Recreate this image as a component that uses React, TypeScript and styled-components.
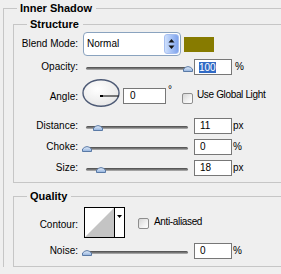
import React from "react";
import styled, { createGlobalStyle } from "styled-components";

const Global = createGlobalStyle`
  html, body { margin: 0; padding: 0; background: #efefef; overflow: hidden; }
  body {
    width: 281px; height: 274px;
    font-family: "Liberation Sans", Arial, sans-serif;
    font-size: 10px; color: #000;
  }
`;

const Outer = styled.fieldset`
  margin: 2px 0 0 3px;
  padding: 0;
  width: 278px;
  min-width: 0;
  box-sizing: border-box;
  border: 1px solid #c6c6c6;
  border-right: none;
  border-bottom: none;
`;

const Legend = styled.legend`
  margin-left: 13px;
  padding: 0 4px 0 3px;
  height: 13px;
  font-size: 11px;
  line-height: 13px;
  font-weight: bold;
  white-space: nowrap;
`;

const Group = styled.fieldset<{ $mt: number; $pt: number; $pb: number }>`
  margin: ${(p) => p.$mt}px 0 0 9px;
  padding: ${(p) => p.$pt}px 0 ${(p) => p.$pb}px 0;
  width: 268px;
  min-width: 0;
  box-sizing: border-box;
  border: 1px solid #c6c6c6;
  border-right: none;
  display: flex;
  flex-direction: column;
`;

const Row = styled.div<{ $h: number; $mt: number; $align?: string }>`
  display: flex;
  align-items: ${(p) => p.$align ?? "center"};
  height: ${(p) => p.$h}px;
  margin-top: ${(p) => p.$mt}px;
  flex: none;
`;

const Label = styled.span<{ $mt?: number }>`
  width: 64px;
  flex: none;
  text-align: right;
  line-height: 12px;
  white-space: nowrap;
  margin-top: ${(p) => p.$mt ?? 0}px;
`;

const Combo = styled.div`
  margin-left: 5px;
  width: 98px;
  height: 24px;
  flex: none;
  box-sizing: border-box;
  border: 1px solid #8aa3bf;
  border-radius: 4px;
  background: #fff;
  display: flex;
  align-items: center;
  padding: 0 1px 0 3px;
`;

const ComboText = styled.span`
  flex: 1;
  line-height: 12px;
`;

const ComboButton = styled.div`
  width: 15px;
  height: 20px;
  box-sizing: border-box;
  border: 1px solid #a7bff0;
  border-radius: 3px;
  background: linear-gradient(90deg, #cfe0fc 0%, #a9c4f6 45%, #7fa3ec 100%);
  display: flex;
  align-items: center;
  justify-content: center;
`;

const Swatch = styled.div<{ $color: string }>`
  margin-left: 3px;
  width: 30px;
  height: 15px;
  flex: none;
  background: ${(p) => p.$color};
`;

const SliderWrap = styled.div`
  position: relative;
  margin-left: 4px;
  width: 110px;
  height: 16px;
  flex: none;
  box-sizing: border-box;
  padding: 0 4px;
  display: flex;
  align-items: center;
`;

const Track = styled.div`
  flex: 1;
  height: 3px;
  margin-top: 2px;
  border-radius: 2px;
  background: linear-gradient(#4a4a4a 0%, #6f6f6f 45%, #b9b9b9 100%);
`;

const ThumbIcon = styled.svg`
  position: absolute;
  top: 6px;
`;

const NumBox = styled.div<{ $w: number; $ml: number; $mt?: number; $pl?: number }>`
  width: ${(p) => p.$w}px;
  height: 16px;
  flex: none;
  margin-left: ${(p) => p.$ml}px;
  margin-top: ${(p) => p.$mt ?? 0}px;
  box-sizing: border-box;
  border: 1px solid #777;
  background: #fff;
  padding-left: ${(p) => p.$pl ?? 4}px;
  display: flex;
  align-items: center;
  line-height: 12px;
`;

const Selected = styled.span`
  background: #316ac5;
  color: #fff;
  line-height: 11px;
`;

const Unit = styled.span<{ $ml: number; $mt?: number }>`
  margin-left: ${(p) => p.$ml}px;
  margin-top: ${(p) => p.$mt ?? 0}px;
  line-height: 12px;
`;

const Dial = styled.svg`
  margin-left: 4px;
  flex: none;
`;

const Check = styled.div<{ $ml: number; $mt?: number }>`
  width: 11px;
  height: 11px;
  flex: none;
  margin-left: ${(p) => p.$ml}px;
  margin-top: ${(p) => p.$mt ?? 0}px;
  box-sizing: border-box;
  border: 1px solid #8e8e8e;
  border-radius: 2px;
  background: linear-gradient(135deg, #d6d6d6 0%, #f2f2f2 60%, #ffffff 100%);
`;

const CheckText = styled.span<{ $ml: number; $mt?: number }>`
  margin-left: ${(p) => p.$ml}px;
  margin-top: ${(p) => p.$mt ?? 0}px;
  font-size: 10px;
  letter-spacing: -0.35px;
  line-height: 12px;
  white-space: nowrap;
`;

const ContourBox = styled.div`
  margin-left: 6px;
  width: 41px;
  height: 31px;
  flex: none;
  box-sizing: border-box;
  border: 1px solid #000;
  background: #fff;
  display: flex;
`;

const ContourPreview = styled.svg`
  flex: none;
`;

const ContourArrow = styled.div`
  flex: 1;
  border-left: 1px solid #000;
  display: flex;
  justify-content: center;
  padding-top: 7px;
`;

const Slider: React.FC<{ pos: number }> = ({ pos }) => (
  <SliderWrap>
    <Track />
    <ThumbIcon width="10" height="7" viewBox="0 0 10 7" style={{ left: `${pos * 100.5}px` }}>
      <defs>
        <linearGradient id="tg" x1="0" y1="0" x2="0" y2="1">
          <stop offset="0" stopColor="#e8f0fb" />
          <stop offset="1" stopColor="#8fb0dc" />
        </linearGradient>
      </defs>
      <path d="M0.5 6.5 L0.5 4 Q5 -0.8 9.5 4 L9.5 6.5 Z" fill="url(#tg)" stroke="#5a7aa6" strokeWidth="1" />
    </ThumbIcon>
  </SliderWrap>
);

export default function App() {
  return (
    <>
      <Global />
      <Outer>
        <Legend>Inner Shadow</Legend>
        <Group $mt={3} $pt={1} $pb={6}>
          <Legend>Structure</Legend>
          <Row $h={24} $mt={0}>
            <Label>Blend Mode:</Label>
            <Combo>
              <ComboText>Normal</ComboText>
              <ComboButton>
                <svg width="7" height="12" viewBox="0 0 7 12">
                  <path d="M3.5 1 L6.5 4.5 L0.5 4.5 Z" fill="#111" />
                  <path d="M3.5 11 L6.5 7.5 L0.5 7.5 Z" fill="#111" />
                </svg>
              </ComboButton>
            </Combo>
            <Swatch $color="#877b00" />
          </Row>
          <Row $h={16} $mt={3}>
            <Label>Opacity:</Label>
            <Slider pos={1} />
            <NumBox $w={38} $ml={2}>
              <Selected>100</Selected>
            </NumBox>
            <Unit $ml={3}>%</Unit>
          </Row>
          <Row $h={28} $mt={4} $align="flex-start">
            <Label $mt={12}>Angle:</Label>
            <Dial width="38" height="28" viewBox="0 0 38 28">
              <defs>
                <radialGradient id="dg" cx="0.4" cy="0.35" r="0.7">
                  <stop offset="0" stopColor="#ffffff" />
                  <stop offset="1" stopColor="#e6e6e6" />
                </radialGradient>
              </defs>
              <ellipse cx="19" cy="14" rx="18" ry="13.2" fill="url(#dg)" stroke="#4e5b76" strokeWidth="1.4" />
              <rect x="18" y="16" width="3" height="2" fill="#000" />
              <line x1="19" y1="17" x2="36.6" y2="17" stroke="#000" strokeWidth="1" />
            </Dial>
            <NumBox $w={43} $ml={3} $mt={9} $pl={6}>0</NumBox>
            <Unit $ml={2} $mt={5}>°</Unit>
            <Check $ml={10} $mt={14} />
            <CheckText $ml={4} $mt={10}>Use Global Light</CheckText>
          </Row>
          <Row $h={16} $mt={11}>
            <Label>Distance:</Label>
            <Slider pos={0.11} />
            <NumBox $w={38} $ml={2} $pl={5}>11</NumBox>
            <Unit $ml={1}>px</Unit>
          </Row>
          <Row $h={16} $mt={5}>
            <Label>Choke:</Label>
            <Slider pos={0} />
            <NumBox $w={38} $ml={2} $pl={5}>0</NumBox>
            <Unit $ml={1}>%</Unit>
          </Row>
          <Row $h={16} $mt={5}>
            <Label>Size:</Label>
            <Slider pos={0.135} />
            <NumBox $w={38} $ml={2} $pl={5}>18</NumBox>
            <Unit $ml={1}>px</Unit>
          </Row>
        </Group>
        <Group $mt={7} $pt={4} $pb={7}>
          <Legend>Quality</Legend>
          <Row $h={31} $mt={0}>
            <Label $mt={4}>Contour:</Label>
            <ContourBox>
              <ContourPreview width="29" height="29" viewBox="0 0 29 29">
                <path d="M0 29 L29 0 L29 29 Z" fill="#c4c4c4" />
              </ContourPreview>
              <ContourArrow>
                <svg width="5" height="3" viewBox="0 0 5 3">
                  <path d="M0 0 L5 0 L2.5 3 Z" fill="#000" />
                </svg>
              </ContourArrow>
            </ContourBox>
            <Check $ml={13} $mt={2} />
            <CheckText $ml={5} $mt={-2}>Anti-aliased</CheckText>
          </Row>
          <Row $h={16} $mt={5}>
            <Label>Noise:</Label>
            <Slider pos={0} />
            <NumBox $w={38} $ml={2} $pl={5}>0</NumBox>
            <Unit $ml={1}>%</Unit>
          </Row>
        </Group>
      </Outer>
    </>
  );
}
